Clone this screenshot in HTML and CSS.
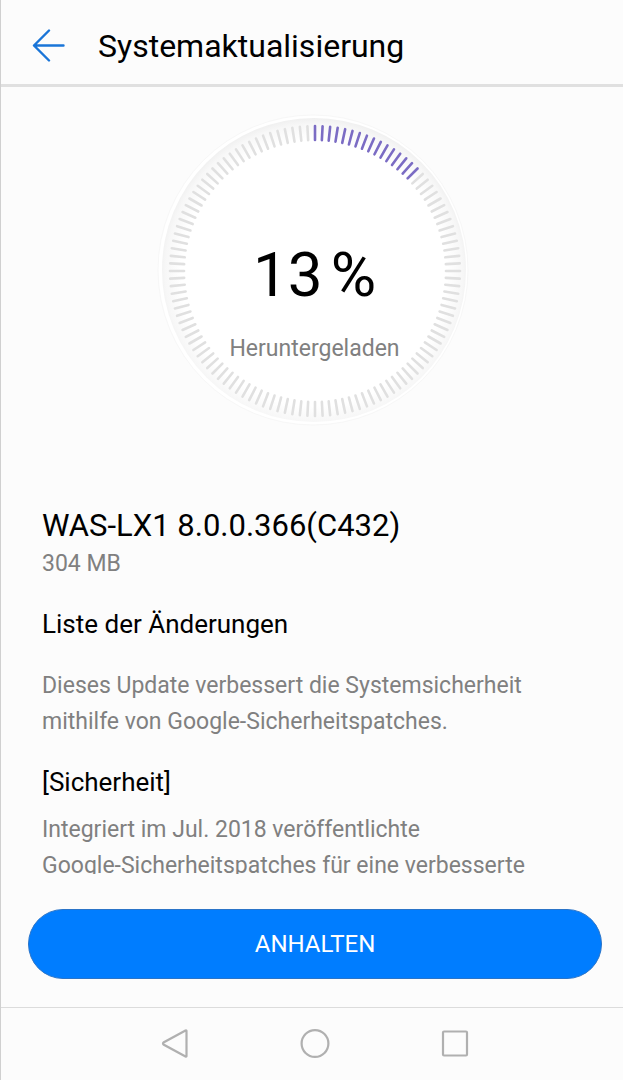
FILE: index.html
```
<!DOCTYPE html>
<html lang="de">
<head>
  <meta charset="UTF-8" />
  <meta name="viewport" content="width=device-width, initial-scale=1.0"/>
  <title>Systemaktualisierung</title>
  <link rel="stylesheet" href="styles.css">
</head>
<body>
  <header class="top-bar">
    <button class="back-btn" type="button" aria-label="Zurück">
      <svg width="34" height="34" viewBox="0 0 34 34"><path d="M32.5 16.5H3M18 1.5L3 16.5l15 15"/></svg>
    </button>
    <h1>Systemaktualisierung</h1>
  </header>

  <section class="progress">
    <div class="dial">
      <svg class="dial-face" viewBox="0 0 316 316">
        <defs>
          <radialGradient id="rim" cx="0.5" cy="0.51" r="0.51">
            <stop offset="0.86" stop-color="#fff"/>
            <stop offset="0.96" stop-color="#f7f7f7"/>
            <stop offset="1" stop-color="#f0f0f0"/>
          </radialGradient>
        </defs>
        <circle class="halo" cx="156" cy="157" r="155"/>
        <circle cx="157" cy="157" r="152" fill="url(#rim)"/>
        <g id="ticks"></g>
      </svg>
      <div class="dial-text">
        <div class="percent"><span id="percent">13</span><span>%</span></div>
        <div class="state">Heruntergeladen</div>
      </div>
    </div>
  </section>

  <main class="details">
    <h2 class="version">WAS-LX1 8.0.0.366(C432)</h2>
    <p class="size">304 MB</p>
    <h3>Liste der Änderungen</h3>
    <p class="intro">Dieses Update verbessert die Systemsicherheit mithilfe von Google-Sicherheitspatches.</p>
    <h3>[Sicherheit]</h3>
    <p>Integriert im Jul. 2018 veröffentlichte<br>Google-Sicherheitspatches für eine verbesserte</p>
  </main>

  <div class="actions">
    <button class="pause-btn" type="button">ANHALTEN</button>
  </div>

  <nav class="nav-bar">
    <button type="button" aria-label="Zurück">
      <svg width="30" height="30" viewBox="0 0 30 30"><path d="M26.500 2v25q0 1-1 .5L3.500 15.500q-1-1 0-2L25.500 1.500q1-.5 1 .5z"/></svg>
    </button>
    <button type="button" aria-label="Startseite">
      <svg width="30" height="30" viewBox="0 0 30 30"><circle cx="15" cy="14.500" r="13.400"/></svg>
    </button>
    <button type="button" aria-label="Letzte Apps">
      <svg width="30" height="30" viewBox="0 0 30 30"><rect x="3" y="2.500" width="24" height="24" rx="1"/></svg>
    </button>
  </nav>

  <script>
    const ticks = document.getElementById("ticks");
    const percent = Number(document.getElementById("percent").textContent);
    const total = 120;
    const done = Math.round(total * percent / 100);

    for (let i = 0; i < total; i++) {
      const line = document.createElementNS("http://www.w3.org/2000/svg", "line");
      line.setAttribute("x1", 158);
      line.setAttribute("x2", 158);
      line.setAttribute("y1", 13);
      line.setAttribute("y2", 27);
      line.setAttribute("transform", "rotate(" + i * 360 / total + " 158 158)");
      line.setAttribute("class", i < done ? "tick done" : "tick");
      ticks.appendChild(line);
    }
  </script>
</body>
</html>
```
FILE: styles.css
```
* {
  box-sizing: border-box;
}

body {
  margin: 0;
  height: 100vh;
  display: flex;
  flex-direction: column;
  overflow: hidden;
  border-left: 1px solid #d0d0d0;
  background-color: #fcfcfc;
  color: #000;
  font-family: Roboto, Arial, sans-serif;
}

h1, h2, h3, p {
  margin: 0;
  font-weight: 400;
}

button {
  padding: 0;
  border: none;
  background: none;
  font-family: inherit;
  cursor: pointer;
}

svg {
  display: block;
}

.top-bar {
  flex: none;
  display: flex;
  align-items: center;
  gap: 33px;
  height: 87px;
  padding: 8px 30px 0;
  border-bottom: 3px solid #e0e0e0;
}

.top-bar h1 {
  font-size: 32px;
  line-height: 40px;
}

.back-btn svg {
  fill: none;
  stroke: #1a75d8;
  stroke-width: 2.4;
  stroke-linecap: round;
  stroke-linejoin: round;
}

.progress {
  flex: none;
  display: flex;
  justify-content: center;
  padding: 26px 0 77px 5px;
}

.dial {
  display: grid;
  width: 316px;
}

.dial-face, .dial-text {
  grid-area: 1 / 1;
}

.halo {
  fill: #fff;
  stroke: #f7f7f7;
}

.tick {
  stroke: #e0e0e0;
  stroke-width: 2.6;
  stroke-linecap: round;
}

.tick.done {
  stroke: #7b6cc4;
}

.dial-text {
  padding-top: 126px;
  text-align: center;
}

.percent {
  display: flex;
  justify-content: center;
  gap: 8px;
  font-size: 62px;
  line-height: 72px;
}

.state {
  padding-top: 24px;
  font-size: 23px;
  line-height: 28px;
  color: #808080;
}

.details {
  flex: 1;
  min-height: 0;
  overflow: hidden;
  padding: 0 41px;
}

.version {
  font-size: 31px;
  line-height: 40px;
}

.details p {
  font-size: 23px;
  line-height: 36px;
  color: #808080;
}

.details h3 {
  padding: 24px 0 12px;
  font-size: 26px;
  line-height: 36px;
}

.details .intro {
  padding: 14px 0 0;
}

.actions {
  flex: none;
  padding: 35px 21px 28px 27px;
}

.pause-btn {
  width: 100%;
  height: 70px;
  border: 1px solid #2a74c8;
  border-radius: 35px;
  background-color: #007dff;
  color: #fff;
  font-size: 24px;
}

.nav-bar {
  flex: none;
  display: flex;
  justify-content: center;
  gap: 110px;
  height: 73px;
  padding-left: 5px;
  border-top: 1px solid #dcdcdc;
}

.nav-bar svg {
  fill: none;
  stroke: #b0b0b0;
  stroke-width: 2.2;
}
```
